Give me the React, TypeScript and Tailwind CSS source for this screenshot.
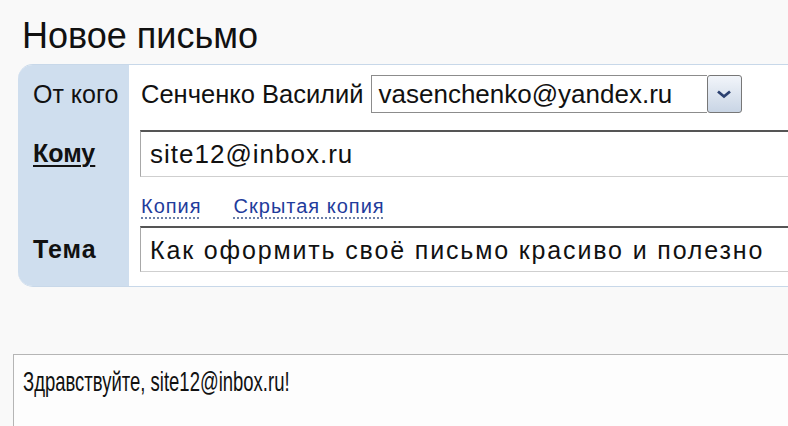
import React from "react";

const F = { fontFamily: '"Liberation Sans", Arial, sans-serif' };

export default function App() {
  return (
    <div
      className="w-[788px] h-[426px] overflow-hidden bg-[#f9f9f9] text-[#111] pt-[16px]"
      style={F}
    >
      <div className="pl-[22px] h-[40px] leading-[40px] text-[36px]">Новое письмо</div>

      <div className="mt-[8px] ml-[18px] grid grid-cols-[111px_1fr] grid-rows-[58px_54px_49px_46px_14px] border-t border-b border-[#c8d8e9] rounded-l-[15px] overflow-hidden bg-white">
        {/* Row 1 */}
        <div className="bg-[#cfdeee] pl-[15px] flex items-center text-[25px] leading-[28px]">
          От кого
        </div>
        <div className="flex items-center pl-[12px] leading-[28px]">
          <span className="text-[25.5px]">Сенченко Василий</span>
          <div className="ml-[7px] w-[371px] h-[38px] flex">
            <div className="flex-1 border border-[#8c8c8c] border-r-0 bg-white pl-[7px] flex items-center text-[26px]">
              vasenchenko@yandex.ru
            </div>
            <div className="w-[35px] h-full border border-[#777] rounded-[3px] bg-gradient-to-b from-[#f2f5fa] to-[#c9d5e5] flex items-center justify-center">
              <svg width="18" height="11" viewBox="0 0 18 11">
                <path d="M3 2.5 L9 7.5 L15 2.5" fill="none" stroke="#2c4170" strokeWidth="2.8" />
              </svg>
            </div>
          </div>
        </div>

        {/* Row 2 */}
        <div className="bg-[#cfdeee] pl-[15px] flex items-end pb-[10px] text-[25px] leading-[28px] font-bold">
          <span className="underline underline-offset-[3px] decoration-2">Кому</span>
        </div>
        <div className="flex items-end pl-[11px]">
          <div className="flex-1 h-[47px] border-t-2 border-t-[#555] border-l border-l-[#a8a8a8] border-b border-b-[#cfcfcf] bg-white pl-[9px] flex items-center text-[26px] leading-[30px] tracking-[1px]">
            site12@inbox.ru
          </div>
        </div>

        {/* Row 3 links */}
        <div className="bg-[#cfdeee]" />
        <div className="pl-[12px] pt-[17px] flex gap-[32px] text-[20px] leading-[24px] tracking-[1px] text-[#1f3c9c]">
          <span className="underline decoration-dotted decoration-[#6b7fa8] underline-offset-[4px]">Копия</span>
          <span className="underline decoration-dotted decoration-[#6b7fa8] underline-offset-[4px]">Скрытая копия</span>
        </div>

        {/* Row 4 */}
        <div className="bg-[#cfdeee] pl-[15px] flex items-center text-[25px] leading-[28px] font-bold tracking-[1px]">
          Тема
        </div>
        <div className="flex items-start pl-[11px]">
          <div className="flex-1 h-[46px] border-t-2 border-t-[#555] border-l border-l-[#a8a8a8] border-b border-b-[#cfcfcf] bg-white pl-[9px] flex items-center text-[25px] leading-[30px] tracking-[1.85px]">
            Как оформить своё письмо красиво и полезно
          </div>
        </div>

        {/* Row 5 */}
        <div className="bg-[#cfdeee]" />
        <div />
      </div>

      <div className="mt-[67px] ml-[13px] h-[200px] border-t border-l border-[#b5b5b5] bg-[#fdfdfd] pl-[9px] pt-[11px]">
        <span className="inline-block origin-left scale-x-[0.66] text-[28px] leading-[32px] whitespace-nowrap">
          Здравствуйте, site12@inbox.ru!
        </span>
      </div>
    </div>
  );
}
